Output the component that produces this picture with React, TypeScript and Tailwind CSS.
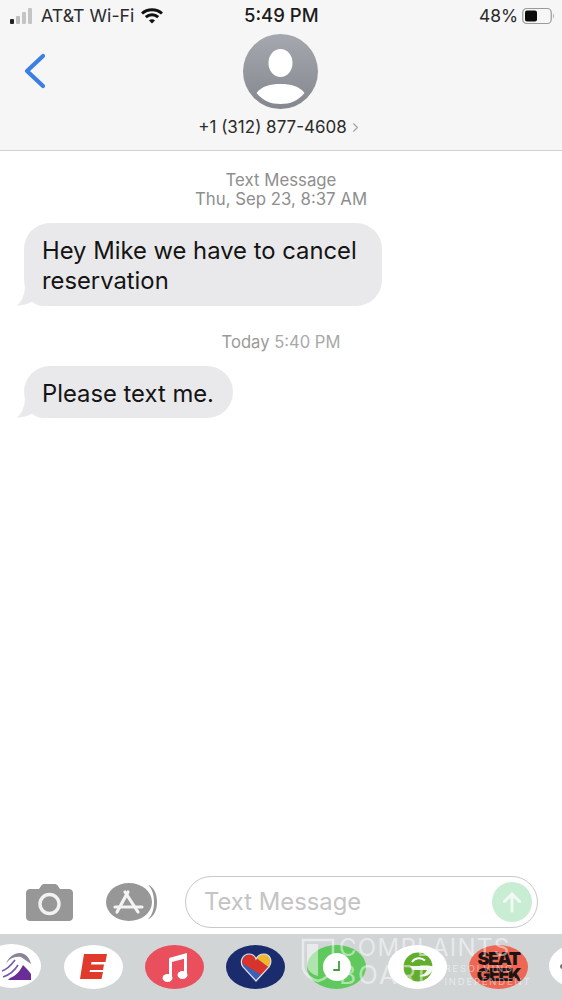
import { ChevronRight } from "lucide-react";

const font = "font-['Inter','Liberation_Sans',sans-serif]";

function StatusBar() {
  return (
    <div className="relative flex h-[31px] items-center justify-between pl-[9px] pr-[8px] pt-[1px] text-[#2a2a2a]">
      <div className="flex items-center">
        {/* signal */}
        <svg width="24" height="17" viewBox="0 0 24 17" className="mr-[8px]">
          <rect x="1" y="11" width="4" height="5" rx="1" fill="#222" />
          <rect x="7" y="8" width="4" height="8" rx="1" fill="#bdbdbd" />
          <rect x="13" y="4" width="4" height="12" rx="1" fill="#c4c4c4" />
          <rect x="19" y="0" width="4" height="16" rx="1" fill="#c4c4c4" />
        </svg>
        <span className="text-[17.800px]">AT&amp;T Wi-Fi</span>
        <svg width="22" height="16" viewBox="0 0 22 16" className="ml-[7px]">
          <path d="M1 5.500C6.500 .5 15.500 .5 21 5.500" fill="none" stroke="#111" strokeWidth="3" />
          <path d="M4.800 9.200c3.600-3.200 8.800-3.200 12.400 0" fill="none" stroke="#111" strokeWidth="3" />
          <path d="M8 12.400c1.800-1.400 4.200-1.400 6 0L11 15.600z" fill="#111" />
        </svg>
      </div>
      <span className="absolute left-[244px] top-[2px] text-[18.500px] font-medium text-[#1c1c1c]">5:49 PM</span>
      <div className="flex items-center">
        <span className="mr-[4px] text-[17.400px]">48%</span>
        <svg width="32" height="18" viewBox="0 0 32 18">
          <rect x=".75" y="1.500" width="28.500" height="15" rx="4" fill="none" stroke="#9a9a9a" strokeWidth="1.200" />
          <rect x="3" y="3.500" width="12" height="11" rx="2" fill="#0c0c0c" />
          <path d="M31 6.500c1 .6 1 4.400 0 5z" fill="#9a9a9a" />
        </svg>
      </div>
    </div>
  );
}

function Avatar() {
  return (
    <svg width="75" height="75" viewBox="0 0 75 75">
      <defs>
        <linearGradient id="av" x1="0" y1="0" x2="0" y2="1">
          <stop offset="0" stopColor="#a6a8b0" />
          <stop offset="1" stopColor="#85878f" />
        </linearGradient>
      </defs>
      <circle cx="37.500" cy="37.500" r="37.500" fill="url(#av)" />
      <ellipse cx="37.500" cy="29" rx="12" ry="14" fill="#fff" />
      <path d="M13.500 59C19 52 27 50 37.500 50S56 52 61.500 59C55 67 47 70 37.500 70S20 67 13.500 59z" fill="#fff" />
    </svg>
  );
}

function Header() {
  return (
    <div className="h-[151px] shrink-0 border-b border-[#cfcfcf] bg-[#f6f6f6]">
      <StatusBar />
      <div className="relative flex flex-col items-center pr-[1px] pt-[3px]">
        <svg width="24" height="36" viewBox="0 0 24 36" className="absolute left-[23px] top-[22px]">
          <path d="M20 3L4 18l16 15" fill="none" stroke="#3a80e4" strokeWidth="4.200" strokeLinecap="round" strokeLinejoin="round" />
        </svg>
        <Avatar />
        <div className="mt-[7px] flex items-center text-[17px] leading-[22px] text-[#2b2b2b]">
          +1 (312) 877-4608
          <ChevronRight className="ml-[1px] h-[15px] w-[15px] text-[#a3a3a3]" strokeWidth={1.800} />
        </div>
      </div>
    </div>
  );
}

function Bubble({ children, className }: { children: React.ReactNode; className: string }) {
  return (
    <div className="relative ml-[24px]">
      {/* tail */}
      <svg width="30" height="20" viewBox="0 0 30 20" className="absolute bottom-0 left-[-7px]">
        <path d="M8 0C8 8 5 15 0 19.500 6 19.500 11 18 15 15.500 18 18 21 19.500 25 20H30V0z" fill="#e9e9eb" />
      </svg>
      <div className={`relative rounded-[26px] bg-[#e9e9eb] pl-[18px] text-[23.800px] leading-[30px] text-[#141414] ${className}`}>
        {children}
      </div>
    </div>
  );
}

function Messages() {
  return (
    <div className="flex-1">
      <div className="flex flex-col items-center pt-[20px] text-[16.800px] leading-[19px] text-[#8e8e8e]">
        <span>Text Message</span>
        <span>Thu, Sep 23, 8:37 AM</span>
      </div>
      <div className="mt-[14px]">
        <Bubble className="h-[83px] w-[358px] pt-[13px]">
          Hey Mike we have to cancel
          <br />
          reservation
        </Bubble>
      </div>
      <div className="mt-[26px] flex justify-center text-[16.600px] leading-[20px] text-[#9a9a9a]">
        <span>
          Today <span className="text-[#a8a8a8]">5:40 PM</span>
        </span>
      </div>
      <div className="mt-[14px]">
        <Bubble className="h-[52px] w-[209px] pt-[13px]">Please text me.</Bubble>
      </div>
    </div>
  );
}

function InputRow() {
  return (
    <div className="flex h-[58px] shrink-0 items-center pb-[6px] pl-[26px]">
      <svg width="47" height="37" viewBox="0 0 47 37">
        <path
          d="M4 5h9l2-3c.5-1 1.500-2 3-2h11c1.500 0 2.500 1 3 2l2 3h9c2 0 4 1.500 4 4v24c0 2.500-2 4-4 4H4c-2 0-4-1.500-4-4V9c0-2.500 2-4 4-4z"
          fill="#979797"
        />
        <circle cx="23.500" cy="20" r="9.500" fill="none" stroke="#f2f2f2" strokeWidth="3.400" />
      </svg>
      <svg width="54" height="38" viewBox="0 0 54 38" className="ml-[33px]">
        <path d="M42 1.500c7 4 9 10 9 17.500s-2 13.500-9 17.500c4.500-5 6-10.500 6-17.500s-1.500-12.500-6-17.500z" fill="#979797" />
        <ellipse cx="23" cy="19" rx="23" ry="19" fill="#979797" />
        <g fill="none" stroke="#f4f4f4" strokeWidth="3.200" strokeLinecap="round">
          <path d="M22 9L11 29" />
          <path d="M19 9l13 20" />
          <path d="M9 24h27" />
        </g>
      </svg>
      <div className="ml-[25px] flex h-[52px] w-[353px] items-center justify-between rounded-[26px] border-[1.500px] border-[#c9c9c9] pl-[18px] pr-[5px]">
        <span className="text-[23.800px] text-[#c4c4c4]">Text Message</span>
        <div className="flex h-[40px] w-[40px] items-center justify-center rounded-full bg-[#c9edd2]">
          <svg width="24" height="24" viewBox="0 0 24 24" fill="none" stroke="#f2faf4" strokeWidth="3" strokeLinecap="round">
            <path d="M12 21V4" />
            <path d="M4.500 11.500L12 4l7.500 7.500" />
          </svg>
        </div>
      </div>
    </div>
  );
}

function AppPill({ bg, children }: { bg: string; children?: React.ReactNode }) {
  return (
    <div className={`flex h-[44px] w-[59px] shrink-0 items-center justify-center overflow-hidden rounded-[50%] ${bg}`}>
      {children}
    </div>
  );
}

function AppStrip() {
  return (
    <div className="relative flex h-[66px] shrink-0 items-center gap-[22px] overflow-hidden bg-[#d1d5d6] pb-[1px] pl-[64px]">
      {/* taco bell, cut off at the left edge */}
      <div className="absolute left-[-18px] top-[10px]">
        <AppPill bg="bg-white">
          <svg width="34" height="34" viewBox="0 0 34 34" className="ml-[10px]">
            <path d="M6 15C9 6 18 2 24 5c4 2 6 6 7 10L21 8C14 7 9 10 6 15z" fill="#8d8399" />
            <path d="M10 29c6-2 10-7 13-13 3 3 6 6 8 9v6H8z" fill="#6a2c95" />
            <path d="M2 22c6-2 10-7 13-11M3 28c6-2 12-7 15-12" fill="none" stroke="#7a5aa8" strokeWidth="1.600" />
          </svg>
        </AppPill>
      </div>
      <AppPill bg="bg-white">
        <svg width="28" height="27" viewBox="0 0 28 27">
          <path d="M4 1H27L25.500 9H11.500L11 11.500H24L23 17H10L9.500 19H23L21.500 26H0z" fill="#df3a2b" />
        </svg>
      </AppPill>
      <AppPill bg="bg-[#ea4f5e]">
        <svg width="26" height="32" viewBox="0 0 26 32">
          <path d="M7 7L25 2v5L10 11z" fill="#fff" />
          <path d="M8.500 8v19M23.500 4v19" fill="none" stroke="#fff" strokeWidth="3" />
          <ellipse cx="5.500" cy="27" rx="5" ry="4" fill="#fff" />
          <ellipse cx="20.500" cy="24" rx="5" ry="4" fill="#fff" />
        </svg>
      </AppPill>
      <AppPill bg="bg-[#1b2c6e]">
        <svg width="32" height="30" viewBox="0 0 32 30">
          <defs>
            <clipPath id="heart">
              <path d="M16 29L3 15C-1 9 3 2 9 2c3 0 6 2 7 5 2-4 5-5 8-5 6 0 9 7 5 13z" />
            </clipPath>
          </defs>
          <g clipPath="url(#heart)">
            <rect width="32" height="30" fill="#3a62b8" />
            <path d="M0 10L9 0 32 18l-6 8z" fill="#d9342b" />
            <path d="M15 5L26 0l8 8-3 9z" fill="#eeb72f" />
          </g>
          <path d="M16 29L3 15C-1 9 3 2 9 2c3 0 6 2 7 5 2-4 5-5 8-5 6 0 9 7 5 13z" fill="none" stroke="#dfe3ee" strokeWidth="1.200" />
        </svg>
      </AppPill>
      <AppPill bg="bg-[#5fc95d]">
        <div className="flex h-[28px] w-[28px] items-center justify-center rounded-full bg-white">
          <svg width="14" height="14" viewBox="0 0 14 14" fill="none" stroke="#3f9e3e" strokeWidth="1.800">
            <path d="M9 1v9H3" />
          </svg>
        </div>
      </AppPill>
      <AppPill bg="bg-white">
        <svg width="30" height="30" viewBox="0 0 30 30">
          <circle cx="15" cy="15" r="14.500" fill="#62ad2c" />
          <path d="M22 8.500C18 5 12 5.500 9 10" fill="none" stroke="#fff" strokeWidth="2" />
          <path d="M7 14h23v3c-2 6-8 9-14 7 4-1 7-3 8-6H10z" fill="#f4f8ee" />
        </svg>
      </AppPill>
      <AppPill bg="bg-[#ee6754]">
        <div className="text-center text-[18px] font-black leading-[16px] tracking-[-1.500px] text-[#1c1413]">
          SEAT
          <br />
          GEEK
        </div>
      </AppPill>
      <div className="absolute left-[549px] top-[10px]">
        <AppPill bg="bg-white">
          <div className="mr-[32px] h-[5px] w-[5px] rounded-full bg-[#777]" />
        </AppPill>
      </div>

      {/* watermark over the strip */}
      <div className="absolute left-[301px] top-[0px] flex text-white/50">
        <svg width="34" height="46" viewBox="0 0 34 46" fill="none" stroke="currentColor" strokeWidth="2.500" className="mt-[3px]">
          <path d="M2 3h30v26c0 8-8 13-15 15C10 42 2 37 2 29z" />
          <path d="M6 7h11v32C10 37 6 33 6 27z" fill="currentColor" stroke="none" />
        </svg>
        <div className="ml-[4px] flex flex-col">
          <span className="text-[24px] leading-[27px] tracking-[1.300px]">COMPLAINTS</span>
          <div className="flex">
            <span className="text-[26px] leading-[28px] tracking-[2px]">BOARD</span>
            <span className="ml-[6px] mt-[1px] text-[9.500px] leading-[13px] tracking-[1.800px]">
              RESOLVING
              <br />
              INDEPENDENT
            </span>
          </div>
        </div>
      </div>
    </div>
  );
}

export default function App() {
  return (
    <div className={`flex h-[1000px] w-[562px] flex-col overflow-hidden bg-white ${font}`}>
      <Header />
      <Messages />
      <InputRow />
      <AppStrip />
    </div>
  );
}
